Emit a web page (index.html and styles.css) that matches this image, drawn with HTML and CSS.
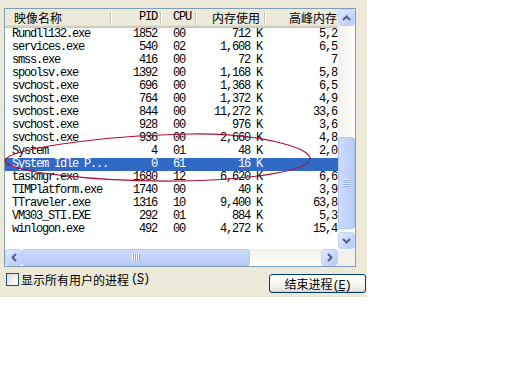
FILE: index.html
```html
<!DOCTYPE html>
<html lang="zh-CN">
<head>
  <meta charset="UTF-8" />
  <title>Windows 任务管理器 - 进程</title>
  <link rel="stylesheet" href="styles.css">
</head>
<body>
  <div class="taskmgr">
    <div class="listview">
      <div class="pane">
        <div class="row head">
          <span class="name">映像名称</span>
          <span class="pid ascii">PID</span>
          <span class="cpu ascii">CPU</span>
          <span class="mem">内存使用</span>
          <span class="peak">高峰内存</span>
        </div>
        <div class="row"><span class="name">Rundll132.exe</span><span class="pid">1852</span><span class="cpu">00</span><span class="mem">712 K</span><span class="peak">5,2</span></div>
        <div class="row"><span class="name">services.exe</span><span class="pid">540</span><span class="cpu">02</span><span class="mem">1,608 K</span><span class="peak">6,5</span></div>
        <div class="row"><span class="name">smss.exe</span><span class="pid">416</span><span class="cpu">00</span><span class="mem">72 K</span><span class="peak">7</span></div>
        <div class="row"><span class="name">spoolsv.exe</span><span class="pid">1392</span><span class="cpu">00</span><span class="mem">1,168 K</span><span class="peak">5,8</span></div>
        <div class="row"><span class="name">svchost.exe</span><span class="pid">696</span><span class="cpu">00</span><span class="mem">1,368 K</span><span class="peak">6,5</span></div>
        <div class="row"><span class="name">svchost.exe</span><span class="pid">764</span><span class="cpu">00</span><span class="mem">1,372 K</span><span class="peak">4,9</span></div>
        <div class="row"><span class="name">svchost.exe</span><span class="pid">844</span><span class="cpu">00</span><span class="mem">11,272 K</span><span class="peak">33,6</span></div>
        <div class="row"><span class="name">svchost.exe</span><span class="pid">928</span><span class="cpu">00</span><span class="mem">976 K</span><span class="peak">3,6</span></div>
        <div class="row"><span class="name">svchost.exe</span><span class="pid">936</span><span class="cpu">00</span><span class="mem">2,660 K</span><span class="peak">4,8</span></div>
        <div class="row"><span class="name">System</span><span class="pid">4</span><span class="cpu">01</span><span class="mem">48 K</span><span class="peak">2,0</span></div>
        <div class="row sel"><span class="name">System Idle P...</span><span class="pid">0</span><span class="cpu">61</span><span class="mem">16 K</span><span class="peak"></span></div>
        <div class="row"><span class="name">taskmgr.exe</span><span class="pid">1680</span><span class="cpu">12</span><span class="mem">6,620 K</span><span class="peak">6,6</span></div>
        <div class="row"><span class="name">TIMPlatform.exe</span><span class="pid">1740</span><span class="cpu">00</span><span class="mem">40 K</span><span class="peak">3,9</span></div>
        <div class="row"><span class="name">TTraveler.exe</span><span class="pid">1316</span><span class="cpu">10</span><span class="mem">9,400 K</span><span class="peak">63,8</span></div>
        <div class="row"><span class="name">VM303_STI.EXE</span><span class="pid">292</span><span class="cpu">01</span><span class="mem">884 K</span><span class="peak">5,3</span></div>
        <div class="row"><span class="name">winlogon.exe</span><span class="pid">492</span><span class="cpu">00</span><span class="mem">4,272 K</span><span class="peak">15,4</span></div>
      </div>

      <!-- vertical scrollbar -->
      <div class="vscroll">
        <div class="sb-btn">
          <svg width="9" height="6" viewBox="0 0 9 6"><path d="M1 5l3.5-3.5L8 5" fill="none" stroke="#4d6185" stroke-width="2"/></svg>
        </div>
        <div class="track-v upper"></div>
        <div class="thumb-v"><span class="grip-v"></span></div>
        <div class="track-v"></div>
        <div class="sb-btn">
          <svg width="9" height="6" viewBox="0 0 9 6"><path d="M1 1l3.5 3.5L8 1" fill="none" stroke="#4d6185" stroke-width="2"/></svg>
        </div>
      </div>

      <!-- horizontal scrollbar -->
      <div class="hscroll">
        <div class="sb-btn">
          <svg width="6" height="9" viewBox="0 0 6 9"><path d="M5 1L1.5 4.5L5 8" fill="none" stroke="#4d6185" stroke-width="2"/></svg>
        </div>
        <div class="thumb-h"><span class="grip-h"></span></div>
        <div class="track-h"></div>
        <div class="sb-btn">
          <svg width="6" height="9" viewBox="0 0 6 9"><path d="M1 1l3.5 3.5L1 8" fill="none" stroke="#4d6185" stroke-width="2"/></svg>
        </div>
      </div>
      <div class="corner"></div>
    </div>

    <div class="footer">
      <label class="check"><span class="box"></span>显示所有用户的进程<span class="key">(<u>S</u>)</span></label>
      <button class="end">结束进程<span class="key">(<u>E</u>)</span></button>
    </div>

    <!-- hand-drawn red ring around the idle process -->
    <svg class="mark" width="367" height="297" viewBox="0 0 367 297">
      <path d="M5 160C10 150 90 136 190 134C260 133 312 148 310 159C308 171 250 180 180 181C100 182 2 172 5 160Z" fill="none" stroke="#b01030" stroke-width="1.2"/>
    </svg>
  </div>
</body>
</html>
```

FILE: styles.css
```css
body {
  margin: 0;
  background: #fff;
}

.taskmgr {
  position: relative;
  width: 367px;
  height: 297px;
  box-sizing: border-box;
  padding: 8px 0 0 4px;
  background: #ece9d8;
  font-family: "Noto Sans CJK SC", sans-serif;
  font-size: 12px;
  color: #000;
}

.listview {
  width: 352px;
  height: 259px;
  box-sizing: border-box;
  border: 1px solid #7f9db9;
  background: #fff;
  display: grid;
  grid-template-columns: 333px 17px;
  grid-template-rows: 240px 17px;
}

.pane {
  overflow: hidden;
}

/* rows */
.row {
  display: grid;
  grid-template-columns: 107px 50px 35px 69px 72px;
  height: 13px;
  line-height: 13px;
  font-family: "Liberation Mono", "Noto Sans CJK SC", monospace;
  letter-spacing: -1.2px;
  white-space: nowrap;
}

.row span {
  overflow: hidden;
}

.name {
  padding-left: 7px;
}

.pid {
  text-align: right;
  padding-right: 5px;
}

.cpu {
  padding-left: 11px;
}

.mem {
  text-align: right;
  padding-right: 4px;
}

.peak {
  text-align: right;
  padding-right: 1px;
}

.row.sel {
  background: #316ac5;
  color: #fff;
}

/* header */
.row.head {
  height: 19px;
  line-height: 17px;
  letter-spacing: 0;
  font-family: "Noto Sans CJK SC", sans-serif;
  background: #ebeadb;
  box-shadow: inset 0 -1px #cbc7b8, inset 0 -2px #d6d2c2, inset 0 -3px #e2decd;
}

.head .name {
  padding-left: 9px;
}

.head .mem {
  padding-right: 6px;
}

.head .ascii {
  font-family: "Liberation Mono", monospace;
  letter-spacing: -1.2px;
}

.head span:not(.peak) {
  background:
    linear-gradient(#c7c5b2, #c7c5b2) right 1px top 3px / 1px 13px no-repeat,
    linear-gradient(#fff, #fff) right 0 top 3px / 1px 13px no-repeat;
}

/* scrollbars */
.vscroll {
  display: flex;
  flex-direction: column;
}

.hscroll {
  display: flex;
}

.sb-btn {
  flex: none;
  width: 17px;
  height: 17px;
  box-sizing: border-box;
  border: 1px solid #c3d3fd;
  border-radius: 3px;
  background: linear-gradient(135deg, #e0e9fe, #b6caf8);
  display: flex;
  align-items: center;
  justify-content: center;
}

.track-v {
  flex: 1;
  background: linear-gradient(90deg, #f3f1ec, #fefefb);
}

.track-v.upper {
  flex: none;
  height: 111px;
}

.thumb-v {
  height: 92px;
  box-sizing: border-box;
  border: 1px solid #b1c6f1;
  border-radius: 3px;
  background: linear-gradient(90deg, #cddbfd, #b8ccf8);
  display: flex;
  align-items: center;
  justify-content: center;
}

.grip-v {
  width: 7px;
  height: 8px;
  background: repeating-linear-gradient(#eef3fe 0 1px, #8eaae6 1px 2px);
}

.track-h {
  flex: 1;
  background: linear-gradient(#f3f1ec, #fefefb);
}

.thumb-h {
  width: 228px;
  box-sizing: border-box;
  border: 1px solid #b1c6f1;
  border-radius: 3px;
  background: linear-gradient(#cddbfd, #b8ccf8);
  display: flex;
  align-items: center;
  justify-content: center;
}

.grip-h {
  width: 8px;
  height: 7px;
  background: repeating-linear-gradient(90deg, #eef3fe 0 1px, #8eaae6 1px 2px);
}

.corner {
  background: #f3f1ec;
}

/* bottom bar */
.footer {
  display: flex;
  justify-content: space-between;
  align-items: flex-start;
  margin: 6px 1px 0 2px;
}

.check {
  display: flex;
  align-items: center;
  gap: 2px;
  line-height: 13px;
}

.box {
  width: 13px;
  height: 13px;
  box-sizing: border-box;
  border: 1px solid #1c5180;
  background: linear-gradient(135deg, #dcdcd7, #fff);
}

.key {
  font-family: "Liberation Mono", monospace;
  letter-spacing: -1.2px;
}

.end {
  width: 97px;
  height: 19px;
  margin-top: 1px;
  padding: 0;
  border: 1px solid #003c74;
  border-radius: 3px;
  background: linear-gradient(#fff, #f5f4ef 60%, #e3e0d6);
  box-shadow: inset 0 -1px #d6d0c5;
  font-family: "Noto Sans CJK SC", sans-serif;
  font-size: 12px;
  line-height: 17px;
  color: #000;
}

.mark {
  position: absolute;
  top: 0;
  left: 0;
  pointer-events: none;
}
```
